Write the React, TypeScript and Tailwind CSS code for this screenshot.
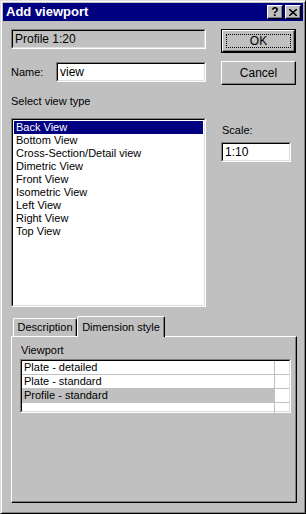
import React from "react";

const font = { fontFamily: '"Liberation Sans", Arial, sans-serif' };

const views = [
  "Back View",
  "Bottom View",
  "Cross-Section/Detail view",
  "Dimetric View",
  "Front View",
  "Isometric View",
  "Left View",
  "Right View",
  "Top View",
];

const styles = ["Plate - detailed", "Plate - standard", "Profile - standard"];

// sunken 3d border used by fields and lists
const sunken =
  "border border-t-[#808080] border-l-[#808080] border-r-white border-b-white";
const sunkenInner =
  "border border-t-black border-l-black border-r-[#dfdfdf] border-b-[#dfdfdf]";

const TitleButton = ({ children }: { children: React.ReactNode }) => (
  <div className="w-[16px] h-[14px] bg-[#c0c0c0] border border-t-white border-l-white border-r-black border-b-black flex items-center justify-center shadow-[inset_-1px_-1px_#808080] text-black text-[12px] font-bold leading-none">
    {children}
  </div>
);

const Button = ({ label, isDefault }: { label: string; isDefault?: boolean }) => (
  <div
    className={`w-[75px] h-[24px] ${isDefault ? "border border-black" : ""}`}
  >
    <div className="w-full h-full bg-[#c0c0c0] border border-t-white border-l-white border-r-black border-b-black shadow-[inset_-1px_-1px_#808080] flex items-center justify-center p-[3px]">
      <div
        className={`w-full h-full flex items-center justify-center text-[12px] ${
          isDefault ? "border border-dotted border-black" : ""
        }`}
      >
        {label}
      </div>
    </div>
  </div>
);

const Field = ({
  value,
  width,
  disabled,
}: {
  value: string;
  width: string;
  disabled?: boolean;
}) => (
  <div className={`${width} h-[20px] ${sunken}`}>
    <div
      className={`w-full h-full ${sunkenInner} ${
        disabled ? "bg-[#c0c0c0]" : "bg-white"
      } pl-[2px] flex items-center text-[12px]`}
    >
      {value}
    </div>
  </div>
);

export default function App() {
  return (
    <div
      style={font}
      className="w-[306px] h-[514px] bg-[#c0c0c0] text-black text-[11px] border border-t-[#dfdfdf] border-l-[#dfdfdf] border-r-black border-b-black shadow-[inset_1px_1px_white,inset_-1px_-1px_#808080] p-[2px] flex flex-col"
    >
      <div className="h-[18px] bg-[#000080] flex items-center justify-between px-[2px]">
        <span className="text-white font-bold text-[13px] pl-[1px]">
          Add viewport
        </span>
        <div className="flex gap-[2px]">
          <TitleButton>?</TitleButton>
          <TitleButton>
            <svg width="8" height="7" viewBox="0 0 8 7">
              <path
                d="M0 0 L8 7 M8 0 L0 7"
                stroke="black"
                strokeWidth="1.6"
              />
            </svg>
          </TitleButton>
        </div>
      </div>

      <div className="flex pl-[8px] pt-[8px]">
        <div className="w-[195px] flex flex-col">
          <Field value="Profile 1:20" width="w-[195px]" disabled />
          <div className="flex items-center mt-[13px]">
            <span className="w-[45px]">Name:</span>
            <Field value="view" width="w-[150px]" />
          </div>
          <div className="mt-[13px] h-[13px] leading-[13px]">
            Select view type
          </div>
          <div className={`mt-[10px] h-[189px] ${sunken}`}>
            <div className={`w-full h-full bg-white ${sunkenInner} p-[1px]`}>
              {views.map((v, i) => (
                <div
                  key={v}
                  className={`h-[13px] leading-[13px] pl-[2px] ${
                    i === 0 ? "bg-[#000080] text-white" : ""
                  }`}
                >
                  {v}
                </div>
              ))}
            </div>
          </div>
        </div>

        <div className="ml-[15px] flex flex-col">
          <Button label="OK" isDefault />
          <div className="mt-[8px]">
            <Button label="Cancel" />
          </div>
          <div className="mt-[39px] pl-[1px] h-[13px] leading-[13px]">
            Scale:
          </div>
          <div className="mt-[5px]">
            <Field value="1:10" width="w-[70px]" />
          </div>
        </div>
      </div>

      <div className="ml-[8px] mt-[8px] flex flex-col w-[286px]">
        <div className="flex items-end h-[21px] pl-[2px]">
          <div className="h-[18px] w-[64px] border-t border-l border-white border-r border-r-black rounded-t-[2px] flex items-center justify-center shadow-[inset_-1px_0_#808080]">
            Description
          </div>
          <div className="h-[21px] w-[88px] -mb-[1px] relative bg-[#c0c0c0] border-t border-l border-white border-r border-r-black rounded-t-[2px] flex items-start pt-[2px] justify-center shadow-[inset_-1px_0_#808080]">
            Dimension style
          </div>
        </div>
        <div className="h-[167px] border border-t-white border-l-white border-r-black border-b-black shadow-[inset_-1px_-1px_#808080] px-[8px] pt-[7px]">
          <div className="h-[13px] leading-[13px] pl-[1px]">Viewport</div>
          <div className={`mt-[2px] w-[271px] h-[54px] ${sunken}`}>
            <div className={`w-full h-full bg-white ${sunkenInner}`}>
              {[...styles, ""].map((s, i) => (
                <div
                  key={i}
                  className="flex h-[14px] border-b border-[#c0c0c0] last:border-b-0"
                >
                  <div
                    className={`w-[252px] pl-[2px] leading-[13px] ${
                      i === 2 ? "bg-[#c0c0c0]" : ""
                    }`}
                  >
                    {s}
                  </div>
                  <div className="flex-1 border-l border-[#c0c0c0]" />
                </div>
              ))}
            </div>
          </div>
        </div>
      </div>
    </div>
  );
}
